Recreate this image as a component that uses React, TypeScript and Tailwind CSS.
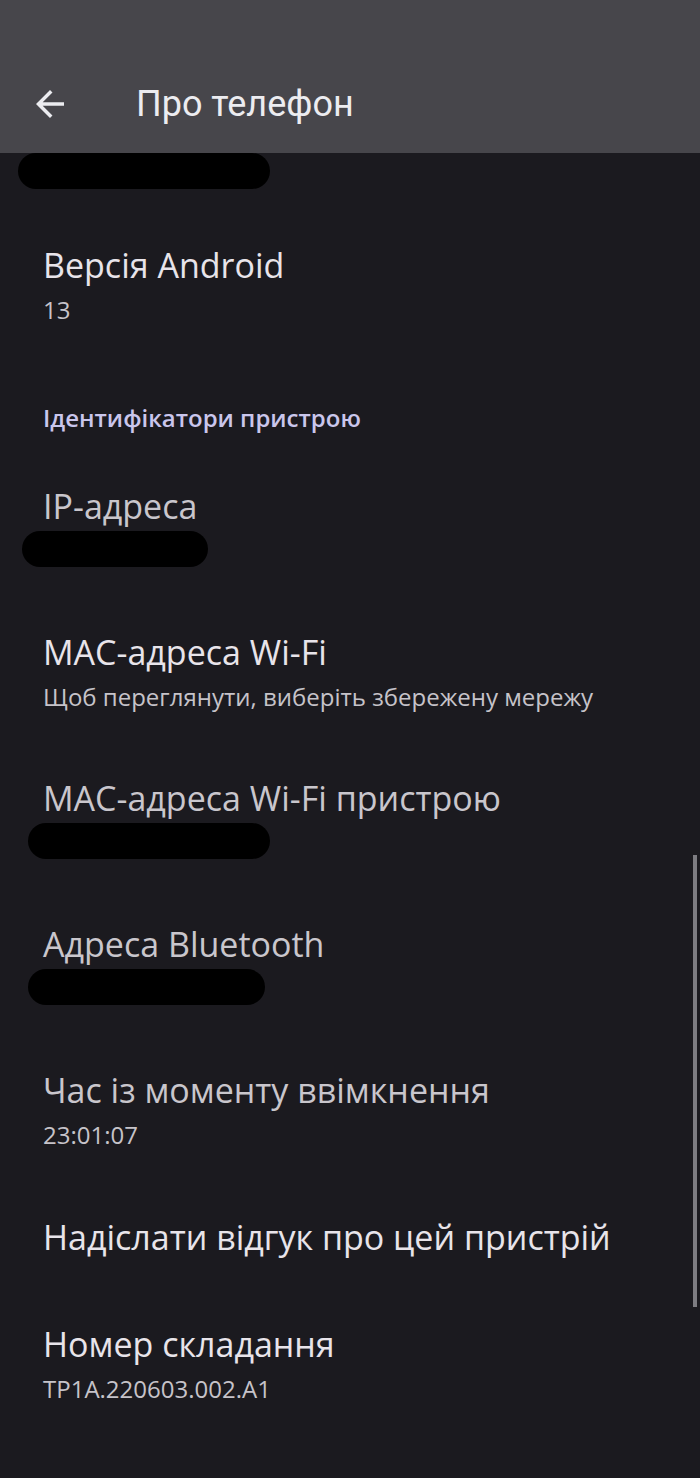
import React from "react";

const roboto = { fontFamily: "Roboto, 'Noto Sans', sans-serif" };
const open = { fontFamily: "'Open Sans', 'Noto Sans', sans-serif" };

function Blob({ w, ml = 0 }: { w: number; ml?: number }) {
  return (
    <div
      className="h-[36px] rounded-full bg-black"
      style={{ width: w, marginLeft: ml }}
    />
  );
}

function Row({
  title,
  sub,
  dim,
  blob,
}: {
  title: string;
  sub?: string;
  dim?: boolean;
  blob?: { w: number; ml: number };
}) {
  const single = !sub && !blob;
  return (
    <div className={`px-[43px] ${single ? "py-[34px]" : "pt-[33px] pb-[32px]"}`}>
      <div
        className={`text-[34px] leading-[40px] ${dim ? "text-[#c9c6cc]" : "text-[#e8e4ea]"}`}
        style={open}
      >
        {title}
      </div>
      {sub && (
        <div className="text-[24px] leading-[32px] mt-[9px] text-[#c6c3c9]" style={open}>
          {sub}
        </div>
      )}
      {blob && (
        <div className="mt-[5px] h-[36px]">
          <Blob w={blob.w} ml={blob.ml} />
        </div>
      )}
    </div>
  );
}

export default function App() {
  return (
    <div className="relative w-[700px] h-[1478px] overflow-hidden bg-[#1b1a1f]" style={roboto}>
      {/* Top bar */}
      <div className="h-[153px] bg-[#47464b] flex items-end pb-[27px]">
        <div className="flex items-center">
          <svg viewBox="0 0 24 24" className="w-[42px] h-[42px] ml-[29px] fill-[#ececf0]">
            <path d="M20 11H7.83l5.59-5.59L12 4l-8 8 8 8 1.41-1.41L7.83 13H20v-2z" />
          </svg>
          <div className="ml-[65px] text-[36px] text-[#ececf0] leading-[44px]">Про телефон</div>
        </div>
      </div>

      {/* partially hidden row */}
      <div className="h-[59px] pl-[18px]">
        <Blob w={252} />
      </div>

      <Row title="Версія Android" sub="13" />

      <div className="px-[43px] pt-[45px] pb-[20px]">
        <div className="text-[24px] leading-[30px] font-semibold text-[#cac6ec]" style={open}>
          Ідентифікатори пристрою
        </div>
      </div>

      <Row title="IP-адреса" dim blob={{ w: 186, ml: -21 }} />
      <Row title="MAC-адреса Wi-Fi" sub="Щоб переглянути, виберіть збережену мережу" />
      <Row title="MAC-адреса Wi-Fi пристрою" dim blob={{ w: 242, ml: -15 }} />
      <Row title="Адреса Bluetooth" dim blob={{ w: 237, ml: -15 }} />
      <Row title="Час із моменту ввімкнення" sub="23:01:07" dim />
      <Row title="Надіслати відгук про цей пристрій" />
      <Row title="Номер складання" sub="TP1A.220603.002.A1" />

      {/* scrollbar */}
      <div className="absolute right-[3px] top-[855px] w-[4px] h-[452px] bg-[#7d7c81]" />
    </div>
  );
}
